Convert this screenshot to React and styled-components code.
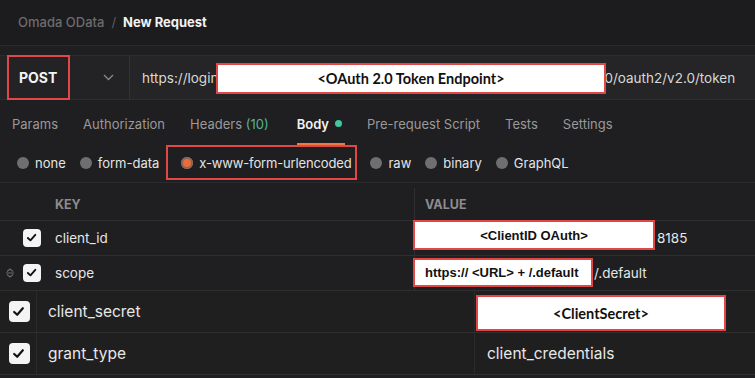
import React from "react";
import styled, { createGlobalStyle } from "styled-components";

const Global = createGlobalStyle`
  html, body { margin: 0; padding: 0; background: #1f1e20; }
  body { font-family: Inter, "Liberation Sans", sans-serif; color: #e6e6e6; }
  * { box-sizing: border-box; }
`;

const tabs = [
  { label: "Params" },
  { label: "Authorization" },
  { label: "Headers", count: "(10)" },
  { label: "Body", active: true },
  { label: "Pre-request Script" },
  { label: "Tests" },
  { label: "Settings" },
];

const bodyTypes = [
  { label: "none" },
  { label: "form-data" },
  { label: "x-www-form-urlencoded", active: true },
  { label: "raw" },
  { label: "binary" },
  { label: "GraphQL" },
];

const Check = ({ size }) => (
  <CheckBox $size={size}>
    <svg width={size * 0.62} height={size * 0.62} viewBox="0 0 12 12">
      <path d="M2 6.4 L4.8 9 L10 3" fill="none" stroke="#111" strokeWidth="2" strokeLinecap="round" strokeLinejoin="round" />
    </svg>
  </CheckBox>
);

const App = () => {
  return (
    <Page>
      <Global />
      <Header>
        <Crumb>Omada OData</Crumb>
        <Slash>/</Slash>
        <CrumbActive>New Request</CrumbActive>
      </Header>

      <UrlRow>
        <MethodCell>
          <Method>POST</Method>
          <svg width="11" height="7" viewBox="0 0 11 7">
            <path d="M1 1 L5.5 5.5 L10 1" fill="none" stroke="#8a8a8a" strokeWidth="1.3" />
          </svg>
        </MethodCell>
        <UrlField>
          <UrlText>https://login</UrlText>
          <Gap />
          <UrlText>0/oauth2/v2.0/token</UrlText>
          <Note $left={86} $top={7} $w={390} $h={31} $font="Lato">
            &lt;OAuth 2.0 Token Endpoint&gt;
          </Note>
        </UrlField>
      </UrlRow>

      <Tabs>
        {tabs.map((t) => (
          <Tab key={t.label} $active={t.active}>
            {t.label}
            {t.count && <Count> {t.count}</Count>}
            {t.active && <Dot />}
          </Tab>
        ))}
      </Tabs>

      <Radios>
        {bodyTypes.map((b) => (
          <RadioItem key={b.label} $active={b.active}>
            <Radio $active={b.active} />
            {b.label}
          </RadioItem>
        ))}
      </Radios>

      <Table>
        <HeadRow>
          <Handle />
          <CheckCell />
          <KeyCell $head>KEY</KeyCell>
          <ValueCell $head>VALUE</ValueCell>
        </HeadRow>
        <Row>
          <Handle />
          <CheckCell>
            <Check size={18} />
          </CheckCell>
          <KeyCell>client_id</KeyCell>
          <ValueCell>
            <ValueText style={{ marginLeft: 242 }}>8185</ValueText>
            <Note $left={-2} $top={-1} $w={242} $h={30}>
              &lt;ClientID OAuth&gt;
            </Note>
          </ValueCell>
        </Row>
        <Row>
          <Handle>
            <svg width="10" height="12" viewBox="0 0 10 12">
              <path d="M2 4.5 L5 2 L8 4.5 M2 7.5 L5 10 L8 7.5 M1 6 H9" fill="none" stroke="#6a6a6a" strokeWidth="1.2" />
            </svg>
          </Handle>
          <CheckCell>
            <Check size={18} />
          </CheckCell>
          <KeyCell>scope</KeyCell>
          <ValueCell>
            <ValueText style={{ marginLeft: 179 }}>/.default</ValueText>
            <Note $left={-2} $top={2} $w={180} $h={29} $align="flex-start">
              https:// &lt;URL&gt; + /.default
            </Note>
          </ValueCell>
        </Row>
      </Table>

      <BigTable>
        <BigRow>
          <BigCheckCell>
            <Check size={21} />
          </BigCheckCell>
          <BigKey>client_secret</BigKey>
          <BigValue>
            <Note $left={1} $top={4} $w={250} $h={36} $font="Lato">
              &lt;ClientSecret&gt;
            </Note>
          </BigValue>
        </BigRow>
        <BigRow>
          <BigCheckCell>
            <Check size={21} />
          </BigCheckCell>
          <BigKey>grant_type</BigKey>
          <BigValue>client_credentials</BigValue>
        </BigRow>
      </BigTable>
    </Page>
  );
};

export default App;

const Page = styled.div`
  width: 755px;
  height: 378px;
  overflow: hidden;
  background: #1f1e20;
`;

const Header = styled.div`
  height: 46px;
  display: flex;
  align-items: center;
  gap: 7px;
  padding: 0 0 2px 18px;
  font-size: 13px;
  background: #1c1b1d;
  border-bottom: 1px solid #2a292b;
`;

const Crumb = styled.span`
  color: #6d6c6e;
  font-weight: 500;
`;

const Slash = styled.span`
  color: #5e5d5f;
`;

const CrumbActive = styled.span`
  color: #f2f2f2;
  font-weight: 700;
`;

const UrlRow = styled.div`
  margin-top: 9px;
  height: 45px;
  display: flex;
  background: #252426;
  border-top: 1px solid #2d2c2e;
  border-bottom: 1px solid #2d2c2e;
`;

const MethodCell = styled.div`
  width: 130px;
  display: flex;
  align-items: center;
  justify-content: space-between;
  padding: 0 15px 0 7px;
  border-right: 1px solid #333234;
  background: #232224;
`;

const Method = styled.div`
  height: 45px;
  width: 63px;
  display: flex;
  align-items: center;
  padding-left: 10px;
  border: 2px solid #e04848;
  font-weight: 700;
  font-size: 14px;
  color: #f4f4f4;
`;

const UrlField = styled.div`
  position: relative;
  flex: 1;
  display: flex;
  align-items: center;
  padding-left: 12px;
`;

const UrlText = styled.span`
  font-size: 13.5px;
  color: #d8d8d8;
`;

const Gap = styled.span`
  width: 386px;
`;

const Note = styled.div`
  position: absolute;
  left: ${(p) => p.$left}px;
  top: ${(p) => p.$top}px;
  width: ${(p) => p.$w}px;
  height: ${(p) => p.$h}px;
  background: #ffffff;
  border: 2px solid #e04848;
  display: flex;
  align-items: center;
  justify-content: ${(p) => p.$align || "center"};
  padding: 0 10px;
  color: #111;
  font-family: ${(p) => (p.$font === "Lato" ? "Lato" : '"Liberation Sans"')}, sans-serif;
  font-weight: 700;
  font-size: ${(p) => (p.$font === "Lato" ? 14.5 : 13)}px;
  white-space: nowrap;
`;

const Tabs = styled.div`
  height: 43px;
  display: flex;
  align-items: center;
  padding: 6px 0 0 12px;
  gap: 25px;
`;

const Tab = styled.div`
  position: relative;
  display: flex;
  align-items: center;
  font-size: 13px;
  color: ${(p) => (p.$active ? "#f2f2f2" : "#9a999b")};
  font-weight: ${(p) => (p.$active ? 600 : 400)};
  padding-bottom: 2px;
  margin-left: ${(p) => (p.$active ? 3 : 0)}px;
  &::after {
    content: "";
    display: ${(p) => (p.$active ? "block" : "none")};
    position: absolute;
    left: 0;
    right: -3px;
    bottom: -11px;
    height: 2px;
    background: #f07a45;
  }
`;

const Count = styled.span`
  color: #53b495;
  white-space: pre;
`;

const Dot = styled.span`
  width: 7px;
  height: 7px;
  border-radius: 50%;
  background: #40c79e;
  margin-left: 6px;
`;

const Radios = styled.div`
  height: 40px;
  display: flex;
  align-items: center;
  padding-left: 17px;
  border-bottom: 1px solid #2a292b;
`;

const RadioItem = styled.div`
  display: flex;
  align-items: center;
  gap: 6px;
  font-size: 13px;
  color: #e4e4e4;
  height: 35px;
  ${(p) =>
    p.$active
      ? `
    border: 2px solid #e04848;
    padding: 0 4px 0 13px;
    margin: 0 13px 0 -7px;
    letter-spacing: -0.15px;
  `
      : `margin-right: 14px;`}
`;

const Radio = styled.span`
  width: 12px;
  height: 12px;
  border-radius: 50%;
  background: ${(p) => (p.$active ? "#f06a35" : "#6f6e70")};
  box-shadow: ${(p) => (p.$active ? "0 0 0 2px #7a6a64 inset" : "none")};
`;

const Table = styled.div`
  display: flex;
  flex-direction: column;
  margin-top: 5px;
`;

const HeadRow = styled.div`
  height: 33px;
  display: flex;
  border-bottom: 1px solid #2f2e30;
`;

const Row = styled.div`
  height: 35px;
  display: flex;
  border-bottom: 1px solid #2f2e30;
`;

const Handle = styled.div`
  width: 18px;
  display: flex;
  align-items: center;
  justify-content: center;
  padding-left: 2px;
`;

const CheckCell = styled.div`
  width: 27px;
  display: flex;
  align-items: center;
  justify-content: center;
`;

const CheckBox = styled.span`
  width: ${(p) => p.$size}px;
  height: ${(p) => p.$size}px;
  border-radius: 4px;
  background: #f4f4f4;
  display: flex;
  align-items: center;
  justify-content: center;
`;

const KeyCell = styled.div`
  width: 370px;
  display: flex;
  align-items: center;
  padding-left: 10px;
  font-size: ${(p) => (p.$head ? 12.5 : 13.5)}px;
  font-weight: ${(p) => (p.$head ? 700 : 400)};
  color: ${(p) => (p.$head ? "#8d8c8e" : "#e6e6e6")};
  border-right: 1px solid #2f2e30;
`;

const ValueCell = styled.div`
  position: relative;
  flex: 1;
  display: flex;
  align-items: center;
  padding-left: ${(p) => (p.$head ? 10 : 0)}px;
  font-size: 12.5px;
  font-weight: ${(p) => (p.$head ? 700 : 400)};
  color: #8d8c8e;
`;

const ValueText = styled.span`
  font-size: 13.5px;
  color: #e6e6e6;
`;

const BigTable = styled.div`
  display: flex;
  flex-direction: column;
  background: #1f1f1f;
`;

const BigRow = styled.div`
  height: 42px;
  display: flex;
  border-bottom: 1px solid #303030;
`;

const BigCheckCell = styled.div`
  width: 37px;
  display: flex;
  align-items: center;
  justify-content: center;
  padding-left: 2px;
  border-right: 1px solid #2a2a2a;
`;

const BigKey = styled.div`
  width: 438px;
  display: flex;
  align-items: center;
  padding-left: 11px;
  font-size: 15.5px;
  color: #e8e8e8;
  border-right: 1px solid #2a2a2a;
`;

const BigValue = styled.div`
  position: relative;
  flex: 1;
  display: flex;
  align-items: center;
  padding-left: 12px;
  font-size: 15.5px;
  color: #e8e8e8;
`;
